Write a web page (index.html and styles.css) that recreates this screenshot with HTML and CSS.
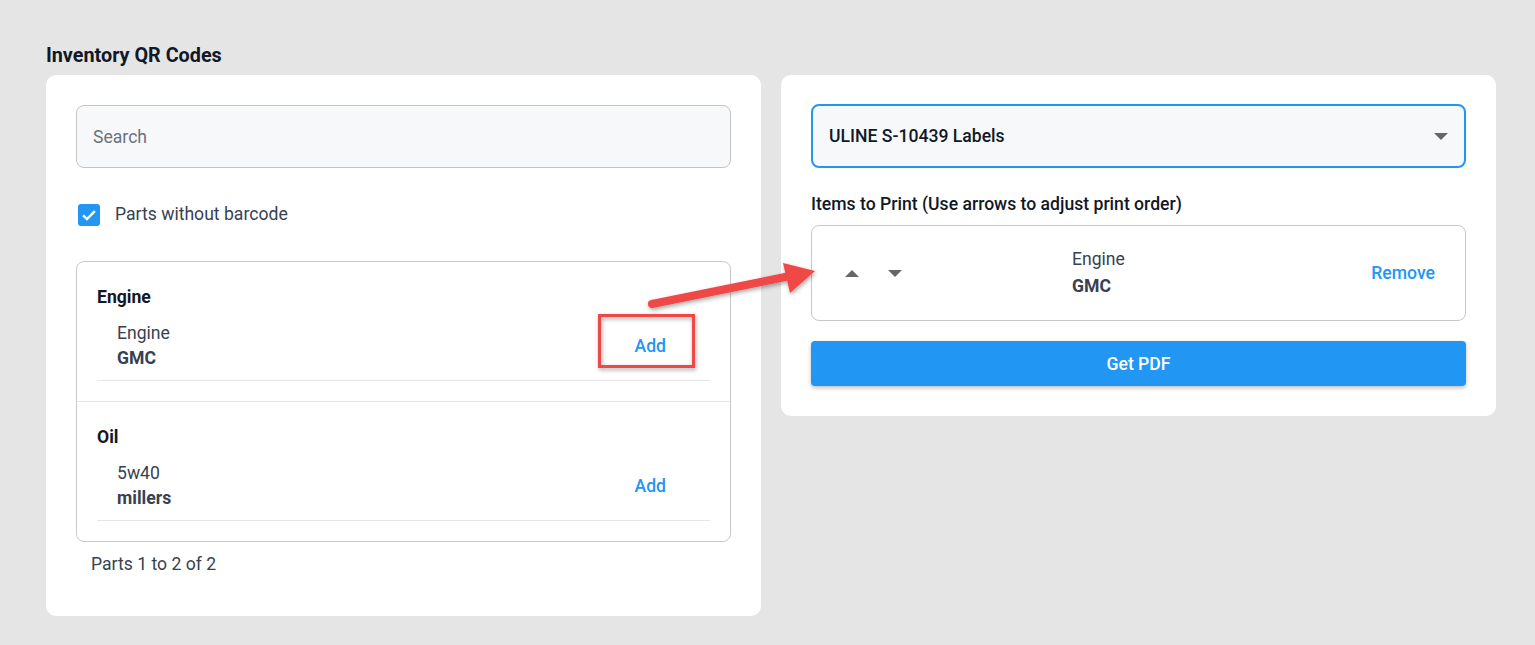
FILE: index.html
```html
<!DOCTYPE html>
<html lang="en">
<head>
  <meta charset="UTF-8">
  <meta name="viewport" content="width=device-width, initial-scale=1.0">
  <title>Inventory QR Codes</title>
  <link rel="stylesheet" href="styles.css">
</head>
<body>
  <div class="page">
    <h1>Inventory QR Codes</h1>
    <div class="columns">
      <div class="card parts-card">
        <input class="search" type="text" placeholder="Search">
        <label class="check-row">
          <span class="checkbox">
            <svg width="18" height="18" viewBox="0 0 16 16"><path d="M2.8 8.3l3.4 3.3L13.2 4.6" fill="none" stroke="#fff" stroke-width="2.2"/></svg>
          </span>
          Parts without barcode
        </label>

        <div class="part-list">
          <div class="group">
            <div class="group-name">Engine</div>
            <div class="part">
              <div class="part-info">
                <div>Engine</div>
                <div class="brand">GMC</div>
              </div>
              <button class="link-btn">Add</button>
            </div>
          </div>
          <div class="group">
            <div class="group-name">Oil</div>
            <div class="part">
              <div class="part-info">
                <div>5w40</div>
                <div class="brand">millers</div>
              </div>
              <button class="link-btn">Add</button>
            </div>
          </div>
        </div>
        <div class="pager">Parts 1 to 2 of 2</div>
      </div>

      <div class="card print-card">
        <div class="select">
          <span>ULINE S-10439 Labels</span>
          <span class="caret"></span>
        </div>
        <div class="section-label">Items to Print (Use arrows to adjust print order)</div>
        <div class="print-item">
          <div class="order-btns">
            <button class="order-btn"><span class="tri up"></span></button>
            <button class="order-btn"><span class="tri down"></span></button>
          </div>
          <div class="item-info">
            <div>Engine</div>
            <div class="brand">GMC</div>
          </div>
          <button class="link-btn remove">Remove</button>
        </div>
        <button class="pdf-btn">Get PDF</button>
      </div>
    </div>
  </div>

  <!-- annotation overlay -->
  <svg class="annotation" width="1535" height="645" viewBox="0 0 1535 645">
    <defs>
      <filter id="shadow" x="-20%" y="-20%" width="140%" height="140%">
        <feDropShadow dx="1" dy="2" stdDeviation="2" flood-color="#000" flood-opacity="0.35"/>
      </filter>
    </defs>
    <g filter="url(#shadow)">
      <rect x="599.5" y="315.5" width="94" height="51" fill="none" stroke="#f04646" stroke-width="3"/>
      <line x1="652" y1="304" x2="790" y2="276" stroke="#f04646" stroke-width="8" stroke-linecap="round"/>
      <polygon points="783,263 815,271 790,293" fill="#f04646"/>
    </g>
  </svg>
</body>
</html>
```

FILE: styles.css
```css
* {
  box-sizing: border-box;
}
body {
  margin: 0;
  background: #e5e5e5;
  font-family: Roboto, "Noto Sans", sans-serif;
  color: #374151;
}
.page {
  padding: 44px 39px 0 46px;
}
h1 {
  margin: 0 0 8px;
  font-size: 19.8px;
  line-height: 23px;
  font-weight: 700;
  color: #111827;
}
.columns {
  display: grid;
  grid-template-columns: 715px 715px;
  gap: 20px;
  align-items: start;
}
.card {
  background: #fff;
  border-radius: 10px;
  padding: 30px;
}
.parts-card {
  padding-bottom: 39px;
}
.search {
  display: block;
  width: 100%;
  height: 63px;
  border: 1px solid #c4c4c4;
  border-radius: 8px;
  background: #f7f8fa;
  padding: 0 16px;
  font-family: inherit;
  font-size: 17.6px;
  color: #374151;
}
.search::placeholder {
  color: #6b7280;
}
.check-row {
  display: flex;
  align-items: center;
  gap: 15px;
  margin: 35px 0 0 2px;
  font-size: 17.6px;
  line-height: 23px;
}
.checkbox {
  width: 22px;
  height: 22px;
  border-radius: 3px;
  background: #2196f3;
  display: flex;
  align-items: center;
  justify-content: center;
}
.part-list {
  margin-top: 35px;
  border: 1px solid #c9c9c9;
  border-radius: 8px;
}
.group {
  padding: 23px 20px 20px;
  border-bottom: 1px solid #e6e6e6;
}
.group:last-child {
  border-bottom: none;
}
.group-name {
  font-size: 17.6px;
  line-height: 24px;
  font-weight: 700;
  color: #111827;
}
.part {
  display: flex;
  align-items: center;
  justify-content: space-between;
  margin-top: 12px;
  padding: 0 44px 9px 20px;
  border-bottom: 1px solid #e6e6e6;
}
.part-info {
  font-size: 17.6px;
  line-height: 25px;
}
.brand {
  font-weight: 700;
  color: #374151;
}
.link-btn {
  border: none;
  background: none;
  padding: 0;
  font-family: inherit;
  font-size: 17.6px;
  font-weight: 500;
  color: #2196f3;
  cursor: pointer;
}
.pager {
  margin-top: 10px;
  padding-left: 15px;
  font-size: 17.6px;
  line-height: 25px;
}
.select {
  display: flex;
  align-items: center;
  justify-content: space-between;
  height: 64px;
  margin-top: -1px;
  border: 2px solid #2196f3;
  border-radius: 8px;
  background: #f7f8fa;
  padding: 0 16px;
  font-size: 17.6px;
  font-weight: 500;
  color: #111827;
}
.caret {
  width: 0;
  height: 0;
  border-left: 7px solid transparent;
  border-right: 7px solid transparent;
  border-top: 7px solid #666;
}
.section-label {
  margin-top: 24px;
  font-size: 17.6px;
  line-height: 24px;
  font-weight: 500;
  color: #111827;
}
.print-item {
  display: grid;
  grid-template-columns: 260px 1fr auto;
  align-items: center;
  height: 96px;
  margin-top: 9px;
  border: 1px solid #c9c9c9;
  border-radius: 8px;
}
.order-btns {
  display: flex;
  gap: 19px;
  padding-left: 28px;
}
.order-btn {
  width: 24px;
  height: 24px;
  border: none;
  background: none;
  padding: 0;
  display: flex;
  align-items: center;
  justify-content: center;
}
.tri {
  width: 0;
  height: 0;
  border-left: 7px solid transparent;
  border-right: 7px solid transparent;
}
.tri.up {
  border-bottom: 7px solid #666;
}
.tri.down {
  border-top: 7px solid #666;
}
.item-info {
  font-size: 17.6px;
  line-height: 27px;
}
.remove {
  padding-right: 30px;
}
.pdf-btn {
  display: block;
  width: 100%;
  height: 45px;
  margin-top: 20px;
  border: none;
  border-radius: 4px;
  background: #2196f3;
  color: #fff;
  font-family: inherit;
  font-size: 17.6px;
  font-weight: 500;
  box-shadow: 0 2px 4px rgba(0, 0, 0, 0.25);
}
.annotation {
  position: absolute;
  left: 0;
  top: 0;
  pointer-events: none;
}
```
